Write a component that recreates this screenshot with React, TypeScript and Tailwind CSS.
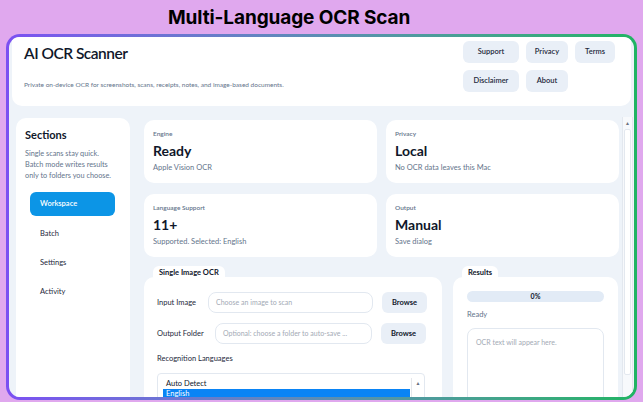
import { ReactNode } from 'react'

const font = { fontFamily: 'Lato, "Open Sans", sans-serif' }

function StatCard({ label, value, note }: { label: string; value: string; note: string }) {
  return (
    <div className="h-[63px] rounded-[10px] bg-white px-[9px] pt-[10px]">
      <div className="text-[6.5px] font-semibold leading-[8px] text-[#64748b]">{label}</div>
      <div className="mt-[5px] text-[14px] font-bold leading-[16px] text-[#0f172a]">{value}</div>
      <div className="mt-[4px] text-[7.5px] leading-[10px] text-[#64748b]">{note}</div>
    </div>
  )
}

function Panel({ title, className, children }: { title: string; className: string; children: ReactNode }) {
  return (
    <div className={className}>
      <div className="ml-[9px] w-fit rounded-t-[6px] bg-white px-[6px] pt-[2px] text-[7.5px] font-bold leading-[9px] text-[#0f172a]">
        {title}
      </div>
      <div className="h-[130px] rounded-[10px] bg-white">{children}</div>
    </div>
  )
}

function HeaderButton({ children }: { children: ReactNode }) {
  return (
    <div className="flex h-[22px] items-center justify-center rounded-[6px] bg-[#e9eff7] text-[7.5px] font-semibold text-[#1e293b]">
      {children}
    </div>
  )
}

export default function App() {
  const nav = ['Batch', 'Settings', 'Activity']

  return (
    <div className="h-[402px] w-[643px] overflow-hidden bg-[#e0a8ee]" style={font}>
      <div
        className="h-[34px] pl-[168px] pt-[6px] text-[19px] font-bold leading-[24px] tracking-[-0.1px] text-black"
        style={{ fontFamily: 'Inter, sans-serif' }}
      >
        Multi-Language OCR Scan
      </div>

      <div className="mx-[6px] h-[366px] rounded-[14px] bg-gradient-to-r from-[#7b4ff2] to-[#1fb463] p-[3px]">
        <div className="flex h-full flex-col overflow-hidden rounded-[11px] bg-[#eef3f9]">
          {/* header */}
          <div className="mx-[3px] flex h-[69px] shrink-0 justify-between rounded-b-[10px] bg-white pl-[12px] pr-[16px]">
            <div className="pt-[6px]">
              <div className="text-[15.5px] font-semibold leading-[20px] tracking-[-0.5px] text-[#0f172a]">
                AI OCR Scanner
              </div>
              <div className="mt-[17px] text-[6.5px] leading-[9px] text-[#64748b]">
                Private on-device OCR for screenshots, scans, receipts, notes, and image-based documents.
              </div>
            </div>
            <div className="grid grid-cols-[56px_42px_40px] content-start gap-x-[7px] gap-y-[7px] pt-[4px]">
              <HeaderButton>Support</HeaderButton>
              <HeaderButton>Privacy</HeaderButton>
              <HeaderButton>Terms</HeaderButton>
              <HeaderButton>Disclaimer</HeaderButton>
              <HeaderButton>About</HeaderButton>
            </div>
          </div>

          <div className="flex min-h-0 flex-1 pl-[7px] pt-[12px]">
            {/* sidebar */}
            <div className="h-[300px] w-[114px] shrink-0 rounded-[10px] bg-white px-[9px] pt-[10px]">
              <div className="text-[11px] font-bold leading-[14px] text-[#0f172a]">Sections</div>
              <div className="mt-[6px] whitespace-nowrap text-[7.3px] leading-[11px] text-[#64748b]">
                Single scans stay quick.
                <br />
                Batch mode writes results
                <br />
                only to folders you choose.
              </div>
              <div className="ml-[5px] mt-[11px] flex h-[24px] w-[85px] items-center rounded-[6px] bg-[#0c95e6] pl-[10px] text-[7.5px] font-semibold text-white">
                Workspace
              </div>
              {nav.map((n, i) => (
                <div
                  key={n}
                  className={`ml-[15px] text-[7.5px] leading-[13px] text-[#1e293b] ${i === 0 ? 'mt-[11px]' : 'mt-[16px]'}`}
                >
                  {n}
                </div>
              ))}
            </div>

            {/* main */}
            <div className="ml-[14px] w-[475px] shrink-0 pt-[2px]">
              <div className="grid grid-cols-2 gap-x-[9px] gap-y-[11px]">
                <StatCard label="Engine" value="Ready" note="Apple Vision OCR" />
                <StatCard label="Privacy" value="Local" note="No OCR data leaves this Mac" />
                <StatCard label="Language Support" value="11+" note="Supported. Selected: English" />
                <StatCard label="Output" value="Manual" note="Save dialog" />
              </div>

              <div className="mt-[9px] flex gap-[11px]">
                <Panel title="Single Image OCR" className="w-[298px]">
                  <div className="px-[13px] pt-[15px]">
                    <div className="flex items-center">
                      <div className="w-[51px] text-[7.5px] text-[#1e293b]">Input Image</div>
                      <div className="flex h-[21px] w-[165px] items-center rounded-[8px] border border-[#e2e8f0] pl-[7px] text-[7px] text-[#a3aab5]">
                        Choose an image to scan
                      </div>
                      <div className="ml-[9px] flex h-[21px] w-[45px] items-center justify-center rounded-[6px] bg-[#e9eff7] text-[7.5px] font-bold text-[#0f172a]">
                        Browse
                      </div>
                    </div>
                    <div className="mt-[10px] flex items-center">
                      <div className="w-[58px] text-[7.5px] text-[#1e293b]">Output Folder</div>
                      <div className="flex h-[21px] w-[157px] items-center rounded-[8px] border border-[#e2e8f0] pl-[7px] text-[7px] text-[#a3aab5]">
                        Optional: choose a folder to auto-save ...
                      </div>
                      <div className="ml-[9px] flex h-[21px] w-[45px] items-center justify-center rounded-[6px] bg-[#e9eff7] text-[7.5px] font-bold text-[#0f172a]">
                        Browse
                      </div>
                    </div>
                    <div className="mt-[10px] text-[7.5px] leading-[10px] text-[#1e293b]">Recognition Languages</div>
                    <div className="mt-[9px] flex h-[40px] w-[268px] rounded-[4px] border border-[#e2e8f0] pl-[5px] pt-[4px]">
                      <div className="flex-1">
                        <div className="pl-[3px] text-[7.5px] leading-[11px] text-[#0f172a]">Auto Detect</div>
                        <div className="bg-[#0a84f5] pl-[3px] text-[7.5px] leading-[10px] text-white">English</div>
                      </div>
                      <div className="ml-[1px] w-[13px] border-l border-[#e5e7eb] pt-[2px] text-center text-[5px] leading-[6px] text-[#6b7280]">
                        ▲
                      </div>
                    </div>
                  </div>
                </Panel>

                <Panel title="Results" className="w-[165px]">
                  <div className="px-[14px] pt-[14px]">
                    <div className="flex h-[11px] items-center justify-center rounded-full bg-[#e2ebf6] text-[7px] font-bold text-[#0f172a]">
                      0%
                    </div>
                    <div className="mt-[8px] text-[7.5px] leading-[10px] text-[#64748b]">Ready</div>
                    <div className="mt-[8px] h-[80px] rounded-[8px] border border-[#e2e8f0] pl-[8px] pt-[8px] text-[7px] text-[#a3aab5]">
                      OCR text will appear here.
                    </div>
                  </div>
                </Panel>
              </div>
            </div>

            {/* scrollbar */}
            <div className="ml-[3px] mt-[-1px] flex h-[300px] w-[11px] shrink-0 flex-col items-center border-x border-[#e3e8ef] bg-[#f7f9fc]">
              <div className="pt-[3px] text-[5px] leading-[6px] text-[#6b7280]">▲</div>
              <div className="mt-[3px] h-[246px] w-[7px] rounded-[2px] border border-[#e3e8ef] bg-white" />
            </div>
          </div>
        </div>
      </div>
    </div>
  )
}
